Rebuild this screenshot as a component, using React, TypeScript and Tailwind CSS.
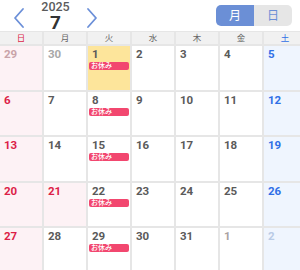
import React from "react";

type Day = { n: number; kind: "prev" | "cur" | "next"; col: number };

const days: Day[] = [];
days.push({ n: 29, kind: "prev", col: 0 });
days.push({ n: 30, kind: "prev", col: 1 });
for (let i = 1; i <= 31; i++) days.push({ n: i, kind: "cur", col: (i + 1) % 7 });
days.push({ n: 1, kind: "next", col: 5 });
days.push({ n: 2, kind: "next", col: 6 });

const heads = ["日", "月", "火", "水", "木", "金", "土"];

function Chevron({ dir }: { dir: "l" | "r" }) {
  return (
    <svg width="12" height="22" viewBox="0 0 12 22" fill="none">
      <path
        d={dir === "l" ? "M10 2 L2 11 L10 20" : "M2 2 L10 11 L2 20"}
        stroke="#6b8fd8"
        strokeWidth="1.8"
        strokeLinecap="round"
        strokeLinejoin="round"
      />
    </svg>
  );
}

function isHoliday(d: Day) {
  return d.kind === "cur" && d.n === 21;
}

function cellBg(d: Day) {
  if (d.kind === "cur" && d.n === 1) return "bg-[#fde59b]";
  if (d.col === 0 || isHoliday(d)) return "bg-[#fdf2f5]";
  if (d.col === 6) return "bg-[#eff5fe]";
  return "bg-white";
}

function numColor(d: Day) {
  if (d.kind === "prev") return d.col === 0 ? "text-[#c9a3a8]" : "text-[#a8a8a8]";
  if (d.kind === "next") return d.col === 6 ? "text-[#b9cbe6]" : "text-[#aaa2a2]";
  if (d.col === 0 || isHoliday(d)) return "text-[#dc1f48]";
  if (d.col === 6) return "text-[#2f6fe6]";
  return "text-[#5a5a5a]";
}

export default function App() {
  return (
    <div className="w-[300px] h-[270px] overflow-hidden bg-white font-['Roboto','Noto_Sans_CJK_JP',sans-serif]">
      <div className="h-[31px] flex items-start">
        <div className="ml-[13px] mt-[7px] flex">
          <Chevron dir="l" />
        </div>
        <div className="w-[61px] flex flex-col items-center">
          <div className="text-[12.5px] leading-[14px] font-medium text-[#5b5b5b]">2025</div>
          <div className="text-[19px] leading-[17px] font-bold text-[#333]">7</div>
        </div>
        <div className="mt-[7px] flex">
          <Chevron dir="r" />
        </div>
        <div className="ml-auto mr-[8px] mt-[5px] flex h-[21px] rounded-[5px] overflow-hidden text-[12px]">
          <div className="w-[38px] bg-[#6b8fd6] text-white flex items-center justify-center">月</div>
          <div className="w-[38px] bg-[#e6e6e6] text-[#6b8fd6] flex items-center justify-center">日</div>
        </div>
      </div>
      <div className="w-[308px] grid grid-cols-[repeat(7,42px)] gap-[2px] bg-[#e6e6e6] pt-[1px]">
        {heads.map((h, i) => (
          <div
            key={h}
            className={`h-[12px] bg-[#f1f1f1] text-[8.5px] leading-[12px] text-center ${
              i === 0 ? "text-[#dc1f48]" : i === 6 ? "text-[#2f6fe6]" : "text-[#666]"
            }`}
          >
            {h}
          </div>
        ))}
        {days.map((d, i) => (
          <div key={i} className={`h-[43.5px] ${cellBg(d)} px-[1px] pt-[3px]`}>
            <div className={`pl-[3px] text-[11.5px] font-bold leading-[11px] ${numColor(d)}`}>{d.n}</div>
            {d.kind === "cur" && d.col === 2 && (
              <div className="mt-[2px] h-[8px] rounded-[2px] bg-[#f2476f] text-white text-[7px] leading-[8px] pl-[2px] font-medium">
                お休み
              </div>
            )}
          </div>
        ))}
      </div>
    </div>
  );
}
